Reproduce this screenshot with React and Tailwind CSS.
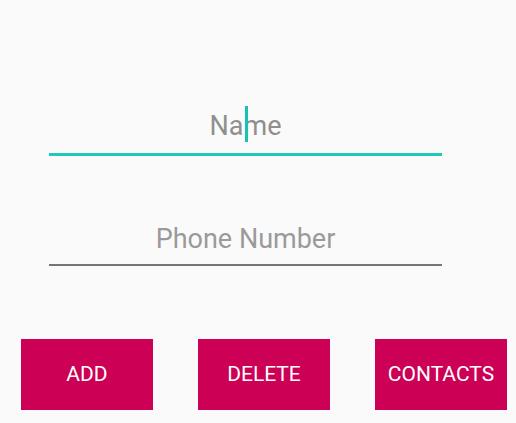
export default function App() {
  return (
    <div className="h-[423px] w-[516px] bg-[#fafafa] font-['Roboto',sans-serif] flex flex-col overflow-hidden">
      <div className="ml-[49px] mt-[108px] w-[393px] border-b-[3px] border-[#1ec8bc] pb-[9px]">
        <div className="relative text-center text-[27px] leading-[36px] text-[#8f8f8f]">
          Name
          <span className="absolute left-[196px] top-[-2px] h-[36px] w-[3px] bg-[#1cbfb3]" />
        </div>
      </div>
      <div className="ml-[49px] mt-[65px] w-[393px] border-b-2 border-[#757575] pb-[7px]">
        <div className="text-center text-[27px] leading-[36px] text-[#9a9a9a]">Phone Number</div>
      </div>
      <div className="mt-[73px] flex gap-[45px] pl-[21px]">
        {["ADD", "DELETE", "CONTACTS"].map((label) => (
          <button
            key={label}
            className="flex h-[71px] w-[132px] items-center justify-center bg-[#cc0055] text-[21px] text-white"
          >
            {label}
          </button>
        ))}
      </div>
    </div>
  );
}
